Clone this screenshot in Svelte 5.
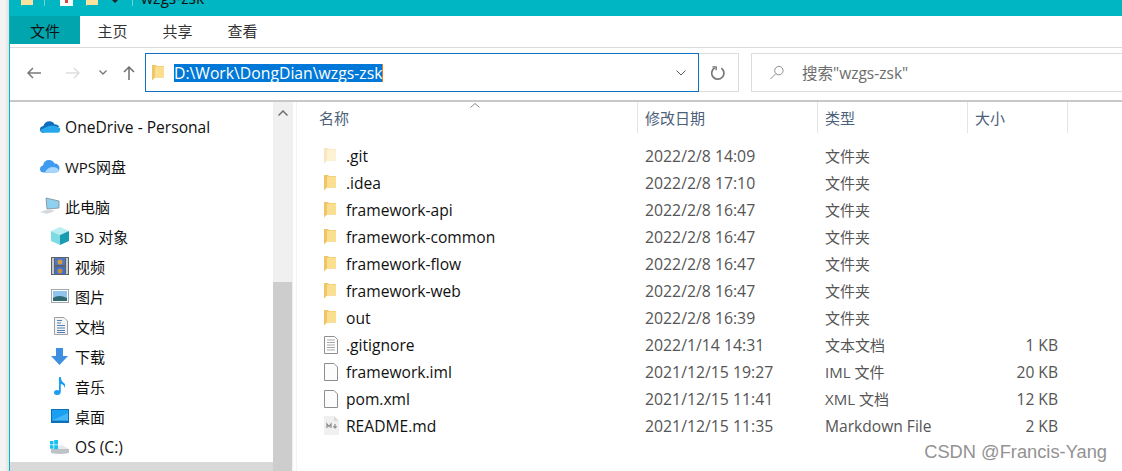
<script>
  const navItems = [
    { label: "OneDrive - Personal", icon: "onedrive", cls: "top wide" },
    { label: "WPS网盘", icon: "wps", cls: "top" },
    { label: "此电脑", icon: "pc", cls: "top" },
    { label: "3D 对象", icon: "cube", cls: "sub" },
    { label: "视频", icon: "film", cls: "sub" },
    { label: "图片", icon: "pic", cls: "sub" },
    { label: "文档", icon: "doc", cls: "sub" },
    { label: "下载", icon: "down", cls: "sub" },
    { label: "音乐", icon: "music", cls: "sub" },
    { label: "桌面", icon: "desk", cls: "sub" },
    { label: "OS (C:)", icon: "drive", cls: "sub wide" }
  ];

  const files = [
    { name: ".git", date: "2022/2/8 14:09", type: "文件夹", size: "", icon: "ghost" },
    { name: ".idea", date: "2022/2/8 17:10", type: "文件夹", size: "", icon: "folder" },
    { name: "framework-api", date: "2022/2/8 16:47", type: "文件夹", size: "", icon: "folder" },
    { name: "framework-common", date: "2022/2/8 16:47", type: "文件夹", size: "", icon: "folder" },
    { name: "framework-flow", date: "2022/2/8 16:47", type: "文件夹", size: "", icon: "folder" },
    { name: "framework-web", date: "2022/2/8 16:47", type: "文件夹", size: "", icon: "folder" },
    { name: "out", date: "2022/2/8 16:39", type: "文件夹", size: "", icon: "folder" },
    { name: ".gitignore", date: "2022/1/14 14:31", type: "文本文档", size: "1 KB", icon: "text" },
    { name: "framework.iml", date: "2021/12/15 19:27", type: "IML 文件", size: "20 KB", icon: "blank" },
    { name: "pom.xml", date: "2021/12/15 11:41", type: "XML 文档", size: "12 KB", icon: "blank" },
    { name: "README.md", date: "2021/12/15 11:35", type: "Markdown File", size: "2 KB", icon: "md" }
  ];
</script>

{#snippet navIcon(name)}
  {#if name === "onedrive"}
    <svg viewBox="0 0 22 14" width="21" height="14"><path d="M4 13 Q0 13 0 9.500 Q0 6.500 3.500 6 Q5 1 10 1 Q13.500 1 15 4 Q19 4 20 7 L10 8 Z" fill="#0f6cbd" /><path d="M4 13 Q1 13 0.500 10 L9 6 Q15 4 21 8 Q22 13 18 13 Z" fill="#28a8ea" /></svg>
  {:else if name === "wps"}
    <svg viewBox="0 0 20 14" width="20" height="14"><path d="M4 13.500 Q0 13.500 0 10 Q0 7 3 6.500 Q4 1 9 1 Q13 1 14.500 4.500 Q19 4.500 19.500 9 Q19.500 13.500 15 13.500 Z" fill="#3f9bf0" /><path d="M5 13 Q8 8 13 8 Q17 8 19 11 Q18 13.500 15 13.500 Z" fill="#a9d6fb" /></svg>
  {:else if name === "pc"}
    <svg viewBox="0 0 20 18" width="20" height="18"><path d="M6 1 L19 4 L19 11 L7 12 Z" fill="#8fd0f0" stroke="#7b8a96" stroke-width="0.800" /><path d="M0 15 L9 12 L15 14 L7 17 Z" fill="#d6dadd" /></svg>
  {:else if name === "cube"}
    <svg viewBox="0 0 18 18" width="18" height="18"><path d="M9 0 L18 4 L9 8 L0 4 Z" fill="#b9eef2" /><path d="M0 4 L9 8 L9 18 L0 14 Z" fill="#7edbe4" /><path d="M18 4 L9 8 L9 18 L18 14 Z" fill="#1a9cb0" /></svg>
  {:else if name === "film"}
    <svg viewBox="0 0 18 18" width="18" height="18"><rect width="18" height="18" fill="#5d6266" /><rect x="1" y="1" width="2" height="16" fill="#c9c9c9" /><rect x="15" y="1" width="2" height="16" fill="#c9c9c9" /><rect x="4" y="1" width="10" height="7" fill="#4c77c9" /><rect x="4" y="10" width="10" height="7" fill="#3f6fd0" /><circle cx="9" cy="5" r="2.500" fill="#d49a3c" /><circle cx="9" cy="14" r="2.500" fill="#c58c3b" /></svg>
  {:else if name === "pic"}
    <svg viewBox="0 0 18 14" width="18" height="14"><rect x="0.500" y="0.500" width="17" height="13" fill="#fff" stroke="#a5a8aa" /><rect x="2" y="2" width="14" height="10" fill="#8fc4ec" /><path d="M2 9 Q8 5 16 9 L16 12 L2 12 Z" fill="#2f6a70" /></svg>
  {:else if name === "doc"}
    <svg class="doc" viewBox="0 0 14 18" width="14" height="18"><path d="M0.500 0.500 L10 0.500 L13.500 4 L13.500 17.500 L0.500 17.500 Z" fill="#f4f4f4" stroke="#a0a0a0" /><path d="M3 3.500 H8 M3 6 H7 M3 8.500 H11 M3 11 H11 M3 13.500 H11 M3 15.500 H11" stroke="#4f7fb5" stroke-width="1" /></svg>
  {:else if name === "down"}
    <svg viewBox="0 0 17 17" width="17" height="17"><path d="M5 0 H12 V8 H17 L8.500 17 L0 8 H5 Z" fill="#3d90df" /></svg>
  {:else if name === "music"}
    <svg class="doc" viewBox="0 0 12 18" width="12" height="18"><path d="M5 0 H6.800 Q7 4 10 6 Q12 8 10.500 11 Q10.500 7.500 6.800 7 V14.500 Q6.800 18 3 18 Q0 18 0 15.500 Q0 13 3 13 Q4 13 5 13.500 Z" fill="#1b9df0" /></svg>
  {:else if name === "desk"}
    <svg viewBox="0 0 18 14" width="18" height="14"><rect width="18" height="14" fill="#0f6fb4" /><rect x="1" y="1" width="16" height="10.500" fill="#19a0f2" /><path d="M1 11.500 L17 4 V11.500 Z" fill="#45b6f6" /></svg>
  {:else}
    <svg class="drive" viewBox="0 0 20 15" width="20" height="15"><path d="M1 9 L19 9 L19 13 Q10 15 1 13 Z" fill="#bfc3c6" /><path d="M1 9 L12 5 L19 9 Z" fill="#e6e8e9" /><rect x="0" y="1" width="3.500" height="3.500" fill="#19c1f2" /><rect x="4.200" y="0" width="3.800" height="4.500" fill="#19c1f2" /><rect x="0" y="5.200" width="3.500" height="3.500" fill="#19c1f2" /><rect x="4.200" y="5.200" width="3.800" height="4" fill="#19c1f2" /></svg>
  {/if}
{/snippet}

{#snippet fileIcon(name)}
  {#if name === "folder" || name === "ghost"}
    <svg class:ghost={name === "ghost"} viewBox="0 0 12 17" width="12" height="17"><path d="M0 1 H4 L5 2 H12 V13.500 H3 L0 16.500 Z" fill="#efc565" /><path d="M3 2.500 H12 V13.500 H3 Z" fill="#fbdf91" /></svg>
  {:else if name === "text"}
    <svg viewBox="0 0 14 18" width="14" height="18"><path d="M0.500 0.500 H10.500 L13.500 3.500 V17.500 H0.500 Z" fill="#fff" stroke="#8e8e8e" /><path d="M3 4 H11 M3 6.500 H11 M3 9 H11 M3 11.500 H11 M3 14 H11" stroke="#a9a9a9" /></svg>
  {:else if name === "blank"}
    <svg viewBox="0 0 14 18" width="14" height="18"><path d="M0.500 0.500 H10 L13.500 4 V17.500 H0.500 Z" fill="#fcfcfc" stroke="#8e8e8e" /></svg>
  {:else}
    <svg viewBox="0 0 15 19" width="15" height="19"><path d="M0 0 H10 L15 5 V19 H0 Z" fill="#f0f0f0" /><path d="M10 0 L15 5 H10 Z" fill="#dcdcdc" /><path d="M3 12 V8 L5 10.500 L7 8 V12 M11 8 V12 M9.300 10.300 L11 12 L12.700 10.300" fill="none" stroke="#8a8a8a" stroke-width="1.200" /></svg>
  {/if}
{/snippet}

<div class="shot">
  <div class="desktop"></div>
  <div class="win">
    <div class="titlebar">
      <svg class="qa-a" viewBox="0 0 12 6" width="12" height="6"><path d="M0 0 H12 V5 H1 L0 6 Z" fill="#fbe39f" /></svg>
      <span class="sep"></span>
      <svg class="qa-b" viewBox="0 0 13 6" width="13" height="6"><rect width="13" height="6" fill="#fff" /><rect x="5" y="0" width="3" height="3" fill="#d9453a" /></svg>
      <svg class="qa-c" viewBox="0 0 12 6" width="12" height="6"><path d="M0 0 H12 V5 H1 L0 6 Z" fill="#fbe39f" /></svg>
      <span class="caret"></span>
      <span class="sep last"></span>
      <span class="title">wzgs-zsk</span>
    </div>
    <div class="tabs">
      <span class="tab active">文件</span>
      <span class="tab">主页</span>
      <span class="tab">共享</span>
      <span class="tab">查看</span>
    </div>
    <div class="toolbar">
      <div class="navbtns">
        <svg viewBox="0 0 16 12" width="16" height="12"><path d="M15 6 H2 M7 1 L2 6 L7 11" fill="none" stroke="#7a7a7a" stroke-width="1.500" /></svg>
        <svg viewBox="0 0 16 12" width="16" height="12"><path d="M1 6 H14 M9 1 L14 6 L9 11" fill="none" stroke="#dedede" stroke-width="1.500" /></svg>
        <svg class="chev" viewBox="0 0 8 5" width="8" height="5"><path d="M0.500 0.500 L4 4 L7.500 0.500" fill="none" stroke="#777" stroke-width="1.300" /></svg>
        <svg viewBox="0 0 12 16" width="12" height="16"><path d="M6 15 V2 M1 7 L6 2 L11 7" fill="none" stroke="#6e6e6e" stroke-width="1.500" /></svg>
      </div>
      <div class="address">
        <svg class="addr-folder" viewBox="0 0 12 17" width="12" height="17"><path d="M0 1 H4 L5 2 H12 V13.500 H3 L0 16.500 Z" fill="#efc565" /><path d="M3 2.500 H12 V13.500 H3 Z" fill="#fbdf91" /></svg>
        <span class="path">D:\Work\DongDian\wzgs-zsk</span>
        <svg class="addr-chev" viewBox="0 0 10 6" width="10" height="6"><path d="M0.500 0.500 L5 5 L9.500 0.500" fill="none" stroke="#555" /></svg>
      </div>
      <div class="refresh">
        <svg viewBox="0 0 16 16" width="15" height="16"><path d="M4 2.500 A6.500 6.500 0 1 0 11 2.800" fill="none" stroke="#777" stroke-width="1.800" /><path d="M1.500 1.500 L5.500 1.500 L5.500 5" fill="none" stroke="#777" stroke-width="1.500" /></svg>
      </div>
      <div class="search">
        <svg viewBox="0 0 16 16" width="16" height="15"><circle cx="10" cy="6" r="4.500" fill="none" stroke="#888" /><path d="M6.800 9.200 L1 15" stroke="#888" /></svg>
        <span>搜索"wzgs-zsk"</span>
      </div>
    </div>
    <div class="body">
      <aside class="nav">
        <ul class="navlist">
          {#each navItems as item}
            <li class={item.cls}><span class="navicon">{@render navIcon(item.icon)}</span>{item.label}</li>
          {/each}
        </ul>
        <div class="nav-sel"></div>
      </aside>
      <div class="scroll">
        <svg viewBox="0 0 10 6" width="10" height="6"><path d="M0.500 5.500 L5 1 L9.500 5.500" fill="none" stroke="#707070" stroke-width="1.500" /></svg>
        <div class="thumb"></div>
      </div>
      <main class="list">
        <div class="head">
          <span class="sort"><svg viewBox="0 0 10 5" width="10" height="5"><path d="M0.500 4.500 L5 0.500 L9.500 4.500" fill="none" stroke="#888" /></svg></span>
          <div class="hc c-name">名称</div>
          <div class="hc c-date">修改日期</div>
          <div class="hc c-type">类型</div>
          <div class="hc c-size">大小</div>
        </div>
        <div class="rows">
          {#each files as f}
            <div class="row">
              <span class="ficon">{@render fileIcon(f.icon)}</span>
              <span class="fname">{f.name}</span>
              <span class="fdate">{f.date}</span>
              <span class="ftype" class:wide={f.icon === "md"}>{f.type}</span>
              <span class="fsize">{f.size}</span>
            </div>
          {/each}
        </div>
      </main>
    </div>
  </div>
  <div class="mark">CSDN @Francis-Yang</div>
</div>

<style>
  :global(body) {
    margin: 0;
    background: #fff;
  }

  .shot {
    position: relative;
    width: 1122px;
    height: 471px;
    overflow: hidden;
    display: flex;
    font-family: "Open Sans", "Noto Sans CJK SC", sans-serif;
    font-size: 15px;
    color: #111;
  }

  .desktop {
    width: 9px;
    background: linear-gradient(to right, #f3f3f3, #f3f3f3 5px, #dedede);
  }

  .win {
    flex: 1;
    min-width: 0;
    border-left: 1px solid #00b6c3;
    display: flex;
    flex-direction: column;
  }

  .titlebar {
    height: 16px;
    flex: none;
    background: #00b6c3;
    overflow: hidden;
    display: flex;
    align-items: flex-start;
    padding-left: 11px;
  }

  .qa-a {
    margin-right: 11px;
  }

  .sep {
    width: 1px;
    height: 6px;
    background: #6fd3da;
    margin-right: 15px;
  }

  .sep.last {
    margin-right: 8px;
  }

  .qa-b {
    margin-right: 13px;
  }

  .qa-c {
    margin-right: 14px;
  }

  .caret {
    width: 0;
    height: 0;
    border: 3px solid transparent;
    border-top-color: #222;
    margin-right: 14px;
  }

  .title {
    margin-top: -12px;
    font-size: 15.600px;
    line-height: 20px;
  }

  .tabs {
    height: 31px;
    flex: none;
    display: flex;
    align-items: flex-start;
    font-size: 15px;
  }

  .tab {
    display: flex;
    align-items: center;
    justify-content: center;
    width: 65px;
    height: 28px;
    color: #333;
  }

  .tab.active {
    width: 70px;
    background: #00a5ae;
    color: #111;
  }

  .toolbar {
    height: 55px;
    flex: none;
    box-sizing: border-box;
    border-top: 1px solid #dcdcdc;
    border-bottom: 2px solid #c8c8c8;
    display: flex;
    align-items: flex-start;
    padding-top: 5px;
  }

  .navbtns {
    width: 135px;
    height: 39px;
    display: flex;
    align-items: center;
    padding-left: 16px;
    box-sizing: border-box;
  }

  .navbtns svg:nth-child(2) {
    margin-left: 23px;
  }

  .navbtns .chev {
    margin-left: 18px;
  }

  .navbtns svg:nth-child(4) {
    margin-left: 16px;
  }

  .address {
    width: 554px;
    height: 39px;
    box-sizing: border-box;
    border: 1px solid #0e70c0;
    display: flex;
    align-items: center;
    padding-left: 6px;
  }

  .addr-folder {
    margin-right: 10px;
    flex: none;
  }

  .path {
    background: #0078d7;
    color: #fff;
    font-size: 15.750px;
    line-height: 18px;
    border-right: 1px solid #e87722;
  }

  .addr-chev {
    margin-left: auto;
    margin-right: 12px;
  }

  .refresh {
    width: 40px;
    height: 39px;
    box-sizing: border-box;
    border: 1px solid #dcdcdc;
    border-left: 0;
    display: flex;
    align-items: center;
    justify-content: center;
  }

  .search {
    flex: 1;
    height: 39px;
    box-sizing: border-box;
    margin-left: 12px;
    border: 1px solid #dcdcdc;
    border-right: 0;
    display: flex;
    align-items: center;
    padding-left: 17px;
    gap: 17px;
    color: #6d6d6d;
    font-size: 15.500px;
  }

  .body {
    flex: 1;
    display: flex;
    min-height: 0;
  }

  .nav {
    width: 263px;
    position: relative;
    overflow: hidden;
  }

  .navlist {
    list-style: none;
    margin: 0;
    padding: 4px 0 0;
  }

  .navlist li {
    height: 30px;
    display: flex;
    align-items: center;
    white-space: nowrap;
  }

  .navlist li.wide {
    font-size: 15.600px;
    box-sizing: border-box;
    padding-top: 2px;
  }

  .navlist li.top {
    height: 40px;
    padding-left: 30px;
  }

  .navlist li.top:nth-child(3) {
    margin-bottom: -5px;
  }

  .navlist li.sub {
    padding-left: 41px;
  }

  .navicon {
    width: 25px;
    display: flex;
    flex: none;
  }

  .sub .navicon {
    width: 24px;
  }

  .navicon :global(.doc) {
    margin-left: 3px;
  }

  .navicon :global(.drive) {
    margin-left: -1px;
  }

  .nav-sel {
    position: absolute;
    left: 0;
    right: 0;
    top: 360px;
    height: 9px;
    background: #d9d9d9;
  }

  .scroll {
    width: 20px;
    background: #f0f0f0;
    position: relative;
    display: flex;
    flex-direction: column;
    align-items: center;
    padding-top: 8px;
    box-sizing: border-box;
  }

  .thumb {
    position: absolute;
    left: 0;
    right: 1px;
    top: 180px;
    bottom: 0;
    background: #cdcdcd;
  }

  .list {
    flex: 1;
    min-width: 0;
    border-left: 1px solid #f3f3f3;
    margin-left: 3px;
  }

  .head {
    position: relative;
    height: 31px;
    display: flex;
    color: #4c607a;
    font-size: 15px;
  }

  .sort {
    position: absolute;
    left: 173px;
    top: 0;
    line-height: 0;
  }

  .hc {
    box-sizing: border-box;
    border-right: 1px solid #e5e5e5;
    display: flex;
    align-items: center;
    padding-left: 7px;
  }

  .c-name {
    width: 341px;
    padding-left: 22px;
  }

  .c-date {
    width: 180px;
  }

  .c-type {
    width: 150px;
  }

  .c-size {
    width: 100px;
  }

  .rows {
    padding-top: 9px;
  }

  .row {
    height: 27px;
    display: flex;
    align-items: center;
    white-space: nowrap;
    font-size: 15.600px;
  }

  .ficon {
    width: 49px;
    padding-left: 27px;
    box-sizing: border-box;
    display: flex;
    flex: none;
  }

  .ghost {
    opacity: 0.4;
  }

  .fname {
    width: 299px;
  }

  .fdate {
    width: 180px;
    color: #555;
    font-size: 15.800px;
  }

  .ftype {
    width: 150px;
    color: #555;
    font-size: 15px;
  }

  .ftype.wide {
    font-size: 15.600px;
  }

  .fsize {
    width: 83px;
    text-align: right;
    color: #555;
  }

  .mark {
    position: absolute;
    right: 15px;
    bottom: 8px;
    font-family: "Liberation Sans", sans-serif;
    font-size: 18.300px;
    color: #929292;
  }
</style>
